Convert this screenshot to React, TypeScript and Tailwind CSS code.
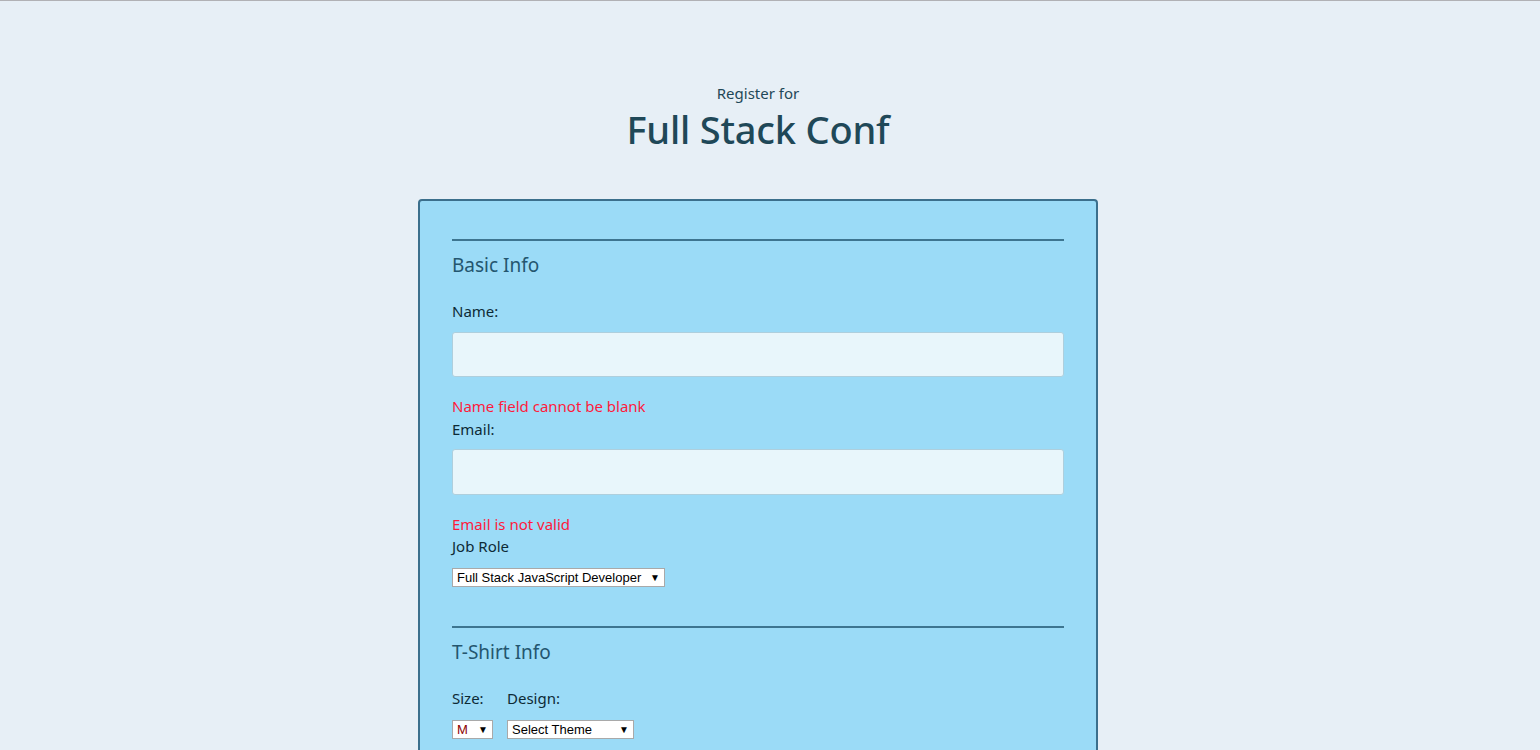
import React from 'react';

const font = { fontFamily: '"Noto Sans", "Open Sans", sans-serif' };

interface SelectBoxProps {
    value: string;
    options: string[];
    width: string;
    red?: boolean;
}

const SelectBox: React.FC<SelectBoxProps> = ({ value, options, width, red }) => (
    <div className={`relative h-[19px] ${width}`}>
        <select
            defaultValue={value}
            className={`block appearance-none w-full h-full bg-white border border-[#a9a9a9] pl-[4px] pr-4 text-[13px] leading-[17px] font-['Liberation_Sans',Arial,sans-serif] outline-none ${red ? 'text-[#8b0000]' : 'text-black'}`}
        >
            {options.map((o) => (
                <option key={o}>{o}</option>
            ))}
        </select>
        <span className="pointer-events-none absolute right-[5px] top-0 h-[19px] flex items-center text-[10px] text-black">▼</span>
    </div>
);

const SectionHeading: React.FC<{ title: string }> = ({ title }) => (
    <>
        <div className="h-[2px] bg-[#3d7590]" />
        <h2 className="mt-[12px] text-[19px] leading-[24px] text-[#24566f]">{title}</h2>
    </>
);

const App: React.FC = () => {
    return (
        <div className="min-h-[750px] bg-[#e7eff6] border-t border-[#b1b1b5] pr-[24px]" style={font}>
            <header className="pt-[82px] text-center text-[#1f4858]">
                <p className="text-[15px] leading-[20px]">Register for</p>
                <h1 className="mt-[2px] text-[38px] leading-[48px] font-medium tracking-[-0.2px]">Full Stack Conf</h1>
            </header>

            <form className="mx-auto mt-[46px] w-[680px] bg-[#9bdbf7] border-2 border-[#3b6f8c] rounded-[4px] px-[32px] pt-[38px] pb-10 text-[15px] text-[#0d2a36]">
                <SectionHeading title="Basic Info" />

                <label className="block mt-[24px] leading-[20px]">Name:</label>
                <input
                    type="text"
                    className="block mt-[11px] w-full h-[45px] bg-[#e8f6fb] border border-[#aecfdd] rounded-[3px] outline-none"
                />
                <p className="mt-[19px] leading-[20px] text-[#ff1a3c]">Name field cannot be blank</p>

                <label className="block mt-[3px] leading-[20px]">Email:</label>
                <input
                    type="email"
                    className="block mt-[10px] w-full h-[46px] bg-[#e8f6fb] border border-[#aecfdd] rounded-[3px] outline-none"
                />
                <p className="mt-[19px] leading-[20px] text-[#ff1a3c]">Email is not valid</p>

                <label className="block mt-[2px] leading-[20px]">Job Role</label>
                <div className="mt-[12px]">
                    <SelectBox
                        value="Full Stack JavaScript Developer"
                        options={['Full Stack JavaScript Developer', 'Front End Developer', 'Back End Developer']}
                        width="w-[213px]"
                    />
                </div>

                <div className="mt-[39px]">
                    <SectionHeading title="T-Shirt Info" />
                </div>

                <div className="mt-[24px] flex gap-[14px]">
                    <div>
                        <label className="block leading-[20px]">Size:</label>
                        <div className="mt-[12px]">
                            <SelectBox value="M" options={['S', 'M', 'L', 'XL']} width="w-[41px]" red />
                        </div>
                    </div>
                    <div>
                        <label className="block leading-[20px]">Design:</label>
                        <div className="mt-[12px]">
                            <SelectBox
                                value="Select Theme"
                                options={['Select Theme', 'Theme - JS Puns', 'Theme - I ♥ JS']}
                                width="w-[127px]"
                            />
                        </div>
                    </div>
                </div>
            </form>
        </div>
    );
};

export default App;
